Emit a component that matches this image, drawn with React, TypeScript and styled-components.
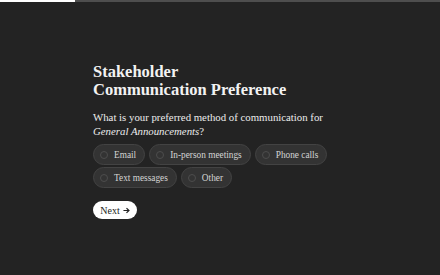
import styled, { createGlobalStyle } from 'styled-components';

const GlobalStyle = createGlobalStyle`
  html, body {
    margin: 0;
    padding: 0;
    background: #232323;
  }
  body {
    font-family: 'Liberation Serif', 'DejaVu Serif', serif;
  }
`;

const Page = styled.div`
  width: 440px;
  height: 275px;
  background: #232323;
  display: flex;
  flex-direction: column;
  overflow: hidden;
`;

const Progress = styled.div`
  height: 2px;
  background: #4e4e4e;
  display: flex;
`;

const ProgressFill = styled.div<{ $pct: number }>`
  width: ${(p) => p.$pct}%;
  background: #ffffff;
`;

const Content = styled.main`
  padding: 61px 0 0 93px;
  display: flex;
  flex-direction: column;
`;

const Title = styled.h1`
  margin: 0;
  font-size: 16.5px;
  line-height: 18px;
  font-weight: 700;
  color: #f2f2f2;
`;

const Question = styled.p`
  margin: 12px 0 0;
  font-size: 10.8px;
  line-height: 13.5px;
  color: #ececec;

  em {
    font-style: italic;
  }
`;

const Options = styled.div`
  margin-top: 6px;
  width: 240px;
  display: flex;
  flex-wrap: wrap;
  gap: 2px 4px;
`;

const Option = styled.label`
  box-sizing: border-box;
  height: 21px;
  padding: 0 8px 0 6px;
  display: flex;
  align-items: center;
  gap: 6px;
  border-radius: 11px;
  background: #333333;
  border: 1px solid #434343;
  color: #d4d4d4;
  font-size: 9.3px;
  white-space: nowrap;
`;

const Radio = styled.span`
  box-sizing: border-box;
  width: 8px;
  height: 8px;
  border-radius: 50%;
  border: 1px solid #4d4d4d;
`;

const NextButton = styled.button`
  margin-top: 13px;
  align-self: flex-start;
  box-sizing: border-box;
  height: 18px;
  width: 44px;
  padding: 0;
  display: flex;
  align-items: center;
  justify-content: center;
  gap: 3px;
  border: none;
  border-radius: 9px;
  background: #ffffff;
  color: #222222;
  font-family: inherit;
  font-size: 10px;
`;

const options = ['Email', 'In-person meetings', 'Phone calls', 'Text messages', 'Other'];

export default function App() {
  return (
    <>
      <GlobalStyle />
      <Page>
        <Progress>
          <ProgressFill $pct={17} />
        </Progress>
        <Content>
          <Title>
            Stakeholder
            <br />
            Communication Preference
          </Title>
          <Question>
            What is your preferred method of communication for
            <br />
            <em>General Announcements</em>?
          </Question>
          <Options>
            {options.map((o) => (
              <Option key={o}>
                <Radio />
                {o}
              </Option>
            ))}
          </Options>
          <NextButton>
            Next
            <svg width="7" height="7" viewBox="0 0 8 8" aria-hidden="true">
              <path d="M0.5 4 H6.5 M4 1.3 L6.8 4 L4 6.7" stroke="#222" strokeWidth="1.4" fill="none" />
            </svg>
          </NextButton>
        </Content>
      </Page>
    </>
  );
}
